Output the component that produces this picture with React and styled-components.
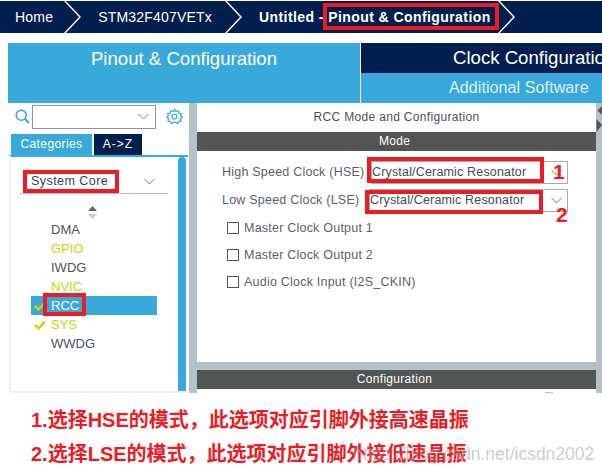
import React from "react";
import styled, { createGlobalStyle } from "styled-components";

const NAVY = "#001f4f";
const BLUE = "#39a9dc";
const GREY = "#b5c1c9";
const RED = "#ed1c24";
const LIME = "#c4d600";

const Global = createGlobalStyle`
  html, body { margin: 0; padding: 0; background: #fff; }
  * { box-sizing: border-box; }
`;

const Page = styled.div`
  position: relative;
  width: 602px;
  height: 473px;
  overflow: hidden;
  background: #fff;
  font-family: "Liberation Sans", Arial, sans-serif;
  padding-top: 1px;
`;

const Crumbs = styled.div`
  display: flex;
  align-items: center;
  height: 32px;
  background: ${NAVY};
  color: #fff;
  font-size: 14px;
`;
const Crumb = styled.div`
  padding-left: ${({ $left }) => $left}px;
  letter-spacing: ${({ $bold }) => ($bold ? 0.42 : 0.2)}px;
  font-weight: ${({ $bold }) => ($bold ? 700 : 400)};
  white-space: nowrap;
`;
const Chevron = styled.svg`
  flex: none;
  width: 18px;
  height: 32px;
  margin-left: ${({ $left }) => $left}px;
`;

const Main = styled.div`
  margin: 10px 0 0 8px;
`;
const TabsRow = styled.div`
  display: flex;
  height: 60px;
  background: ${BLUE};
`;
const TabPinout = styled.div`
  flex: none;
  width: 353px;
  padding-top: 4px;
  text-align: center;
  color: #fff;
  font-size: 18.6px;
  line-height: 24px;
  border-right: 1px solid #fff;
`;
const TabRight = styled.div`
  flex: 1;
  min-width: 0;
  display: flex;
  flex-direction: column;
`;
const TabClock = styled.div`
  height: 30px;
  background: ${NAVY};
  color: #fff;
  font-size: 18.6px;
  line-height: 30px;
  padding-left: 92px;
  white-space: nowrap;
  overflow: hidden;
`;
const TabSoftware = styled.div`
  height: 30px;
  color: #dff1fa;
  font-size: 16px;
  line-height: 30px;
  padding-left: 88px;
  letter-spacing: 0.1px;
  white-space: nowrap;
`;

const Body = styled.div`
  display: flex;
  height: 290px;
`;
const Left = styled.div`
  width: 181px;
  flex: none;
  display: flex;
  flex-direction: column;
`;
const SearchRow = styled.div`
  display: flex;
  align-items: center;
  height: 27px;
  padding-left: 7px;
`;
const SearchBox = styled.div`
  width: 124px;
  height: 24px;
  margin-left: 2px;
  border: 1px solid #8d949a;
  display: flex;
  align-items: center;
  justify-content: flex-end;
  padding-right: 6px;
  color: #888;
`;
const Gear = styled.span`
  display: flex;
  margin-left: 10px;
  color: ${BLUE};
`;
const CatTabs = styled.div`
  display: flex;
  gap: 2px;
  height: 21px;
  margin: 4px 0 0 3px;
`;
const CatTab = styled.div`
  width: ${({ $w }) => $w}px;
  background: ${({ $active }) => ($active ? BLUE : NAVY)};
  color: #fff;
  font-size: 12px;
  line-height: 20px;
  text-align: center;
  letter-spacing: ${({ $active }) => ($active ? 0.4 : 1)}px;
`;
const CatPanel = styled.div`
  flex: 1;
  display: flex;
  border-top: 2px solid ${BLUE};
  border-left: 2px solid #eef0f1;
  margin-right: 1px;
  margin-left: 1px;
  border-bottom: 2px solid #eef0f1;
  border-radius: 0 0 0 3px;
`;
const CatInner = styled.div`
  flex: 1;
  min-width: 0;
  padding: 6px 10px 0 9px;
`;
const Select = styled.div`
  display: flex;
  align-items: center;
  justify-content: space-between;
  height: 31px;
  padding: 6px 13px 0 11px;
  border-bottom: 1px solid #b9c0c5;
  color: #333d6e;
  font-size: 12.5px;
  letter-spacing: 0.45px;
`;
const Sorter = styled.div`
  display: flex;
  justify-content: center;
  margin: 12px 0 0 0;
  padding-right: 3px;
  height: 13px;
`;
const List = styled.div`
  display: flex;
  flex-direction: column;
  margin: 1px 0 0 11px;
`;
const Item = styled.div`
  position: relative;
  height: 19px;
  line-height: 19px;
  font-size: 13px;
  padding-left: 20px;
  width: 126px;
  color: ${({ $on, $lime }) => ($on ? "#fff" : $lime ? LIME : "#4c5266")};
  background: ${({ $on }) => ($on ? BLUE : "transparent")};
`;
const Check = styled.svg`
  position: absolute;
  left: 3px;
  top: 5px;
  width: 12px;
  height: 10px;
`;
const ScrollTrack = styled.div`
  width: 8px;
  flex: none;
  margin-right: 2px;
  background: ${BLUE};
  border-radius: 4px 4px 0 0;
`;

const Divider = styled.div`
  width: 8px;
  flex: none;
  background: ${GREY};
`;
const Right = styled.div`
  width: 399px;
  flex: none;
  display: flex;
  flex-direction: column;
`;
const ModePane = styled.div`
  height: 259px;
  background: #fff;
`;
const PaneTitle = styled.div`
  height: 29px;
  line-height: 28px;
  text-align: center;
  color: #4d5059;
  font-size: 12px;
  letter-spacing: 0.33px;
`;
const Bar = styled.div`
  height: 19px;
  line-height: 19px;
  padding-right: 4px;
  background: #535554;
  color: #fff;
  text-align: center;
  font-size: 12px;
  letter-spacing: 0.3px;
`;
const Rows = styled.div`
  padding: 9px 0 0 25px;
  color: #5b5f6a;
  font-size: 12.5px;
  letter-spacing: 0.22px;
`;
const ModeGroup = styled.div`
  display: flex;
  flex-direction: column;
  gap: 4px;
  margin-bottom: 2px;
`;
const ModeRow = styled.div`
  display: flex;
  align-items: center;
  height: 24px;
`;
const ModeLabel = styled.div`
  width: ${({ $w }) => $w}px;
  flex: none;
  white-space: nowrap;
`;
const Dropdown = styled.div`
  width: ${({ $w }) => $w}px;
  height: 23px;
  flex: none;
  border: 1px solid #a6abb0;
  display: flex;
  align-items: center;
  justify-content: space-between;
  padding: 0 5px 0 0;
  color: #444a5c;
  letter-spacing: 0.17px;
  white-space: nowrap;
`;
const CheckRow = styled.label`
  display: flex;
  align-items: center;
  gap: 5px;
  height: 27px;
  padding-left: 5px;
`;
const Box = styled.span`
  width: 12px;
  height: 12px;
  border: 1px solid #555;
  flex: none;
`;
const Splitter = styled.div`
  height: 8px;
  background: ${GREY};
`;
const ConfigPane = styled.div`
  flex: 1;
  background: #fff;
  padding: 3px 0 0 348px;
`;
const ConfigGrip = styled.div`
  width: 8px;
  height: 1px;
  background: ${GREY};
`;
const SideBar = styled.div`
  flex: 1;
  position: relative;
  background: ${GREY};
`;
const SideGrip = styled.svg`
  position: absolute;
  left: 0;
  top: 3px;
  width: 6px;
  height: 28px;
`;

const Notes = styled.div`
  padding: 10px 0 0 23px;
  color: ${RED};
  font-family: "Liberation Sans", "Noto Sans CJK SC", sans-serif;
  font-weight: 700;
  font-size: 20px;
  line-height: 34px;
  white-space: nowrap;
`;
const Watermark = styled.div`
  position: absolute;
  left: 353px;
  top: 443px;
  color: rgba(170, 170, 170, 0.6);
  font-size: 17.5px;
  line-height: 22px;
  white-space: nowrap;
`;

/* red hand-drawn annotations lying over the screenshot */
const Mark = styled.div`
  position: absolute;
  left: ${({ $x }) => $x}px;
  top: ${({ $y }) => $y}px;
  width: ${({ $w }) => $w}px;
  height: ${({ $h }) => $h}px;
  border: 4px solid ${RED};
`;
const Num = styled.div`
  position: absolute;
  left: ${({ $x }) => $x}px;
  top: ${({ $y }) => $y}px;
  color: ${RED};
  font-size: 21px;
  line-height: 20px;
  font-weight: 700;
`;

const Arrow = ({ left }) => (
  <Chevron $left={left} viewBox="0 0 18 32">
    <path d="M0 -1 L16 16 L0 33" fill="none" stroke="#fff" strokeWidth="1.4" />
  </Chevron>
);

const Caret = ({ color = "#777" }) => (
  <svg width="11" height="7" viewBox="0 0 11 7">
    <path d="M0.5 1 L5.5 6 L10.5 1" fill="none" stroke={color} strokeWidth="1" />
  </svg>
);

const Tick = () => (
  <Check viewBox="0 0 12 10">
    <path d="M1 5 L4.5 8.5 L11 1.5" fill="none" stroke={LIME} strokeWidth="2.4" />
  </Check>
);

export default function App() {
  return (
    <Page>
      <Global />
      <Crumbs>
        <Crumb $left={15}>Home</Crumb>
        <Arrow left={11} />
        <Crumb $left={16}>STM32F407VETx</Crumb>
        <Arrow left={13} />
        <Crumb $left={16} $bold>Untitled - Pinout &amp; Configuration</Crumb>
        <Arrow left={7} />
      </Crumbs>
      <Main>
        <TabsRow>
          <TabPinout>Pinout &amp; Configuration</TabPinout>
          <TabRight>
            <TabClock>Clock Configuration</TabClock>
            <TabSoftware>Additional Software</TabSoftware>
          </TabRight>
        </TabsRow>
        <Body>
          <Left>
            <SearchRow>
              <svg width="15" height="15" viewBox="0 0 15 15">
                <circle cx="6.2" cy="6.2" r="5" fill="none" stroke={BLUE} strokeWidth="1.6" />
                <path d="M9.8 9.8 L14 14" stroke={BLUE} strokeWidth="2" />
              </svg>
              <SearchBox><Caret /></SearchBox>
              <Gear>
                <svg width="17" height="17" viewBox="0 0 24 24" fill="none" stroke="currentColor" strokeWidth="1.7">
                  <circle cx="12" cy="12" r="3.5" />
                  <path d="M12 2 L14 5 L17.5 3.8 L18.2 7.2 L21.8 7.8 L20.5 11 L23 13 L20.3 15.2 L21.2 18.6 L17.7 18.8 L16.5 22 L13.4 20.2 L10.6 20.2 L7.5 22 L6.3 18.8 L2.8 18.6 L3.7 15.2 L1 13 L3.5 11 L2.2 7.8 L5.8 7.2 L6.5 3.8 L10 5 Z" />
                </svg>
              </Gear>
            </SearchRow>
            <CatTabs>
              <CatTab $active $w={81}>Categories</CatTab>
              <CatTab $w={48}>A-&gt;Z</CatTab>
            </CatTabs>
            <CatPanel>
              <CatInner>
                <Select>System Core<Caret /></Select>
                <Sorter>
                  <svg width="9" height="13" viewBox="0 0 9 13">
                    <path d="M4.5 0 L9 5 H0 Z" fill="#666" />
                    <path d="M4.5 13 L9 8 H0 Z" fill="#ccc" />
                  </svg>
                </Sorter>
                <List>
                  <Item>DMA</Item>
                  <Item $lime>GPIO</Item>
                  <Item>IWDG</Item>
                  <Item $lime>NVIC</Item>
                  <Item $on><Tick />RCC</Item>
                  <Item $lime><Tick />SYS</Item>
                  <Item>WWDG</Item>
                </List>
              </CatInner>
              <ScrollTrack />
            </CatPanel>
          </Left>
          <Divider />
          <Right>
            <ModePane>
              <PaneTitle>RCC Mode and Configuration</PaneTitle>
              <Bar>Mode</Bar>
              <Rows>
                <ModeGroup>
                  <ModeRow>
                    <ModeLabel $w={149}>High Speed Clock (HSE)</ModeLabel>
                    <Dropdown $w={197}>Crystal/Ceramic Resonator<Caret /></Dropdown>
                  </ModeRow>
                  <ModeRow>
                    <ModeLabel $w={147}>Low Speed Clock (LSE)</ModeLabel>
                    <Dropdown $w={199}>Crystal/Ceramic Resonator<Caret /></Dropdown>
                  </ModeRow>
                </ModeGroup>
                <CheckRow><Box />Master Clock Output 1</CheckRow>
                <CheckRow><Box />Master Clock Output 2</CheckRow>
                <CheckRow><Box />Audio Clock Input (I2S_CKIN)</CheckRow>
              </Rows>
            </ModePane>
            <Splitter />
            <Bar>Configuration</Bar>
            <ConfigPane><ConfigGrip /></ConfigPane>
          </Right>
          <SideBar>
            <SideGrip viewBox="0 0 6 28">
              <path d="M6 0 L1.5 4.5 L6 9 Z M0.5 13 L6 19 L0.5 26 Z" fill="#555" />
            </SideGrip>
          </SideBar>
        </Body>
        <Notes>
          <div>1.选择HSE的模式，此选项对应引脚外接高速晶振</div>
          <div>2.选择LSE的模式，此选项对应引脚外接低速晶振</div>
        </Notes>
      </Main>
      <Watermark>https://blog.csdn.net/icsdn2002</Watermark>
      <Mark $x={323} $y={3} $w={176} $h={27} />
      <Mark $x={23} $y={170} $w={96} $h={23} />
      <Mark $x={43} $y={293} $w={43} $h={23} />
      <Mark $x={367} $y={157} $w={177} $h={26} />
      <Mark $x={365} $y={190} $w={178} $h={24} />
      <Num $x={553} $y={162}>1</Num>
      <Num $x={556} $y={205}>2</Num>
    </Page>
  );
}
